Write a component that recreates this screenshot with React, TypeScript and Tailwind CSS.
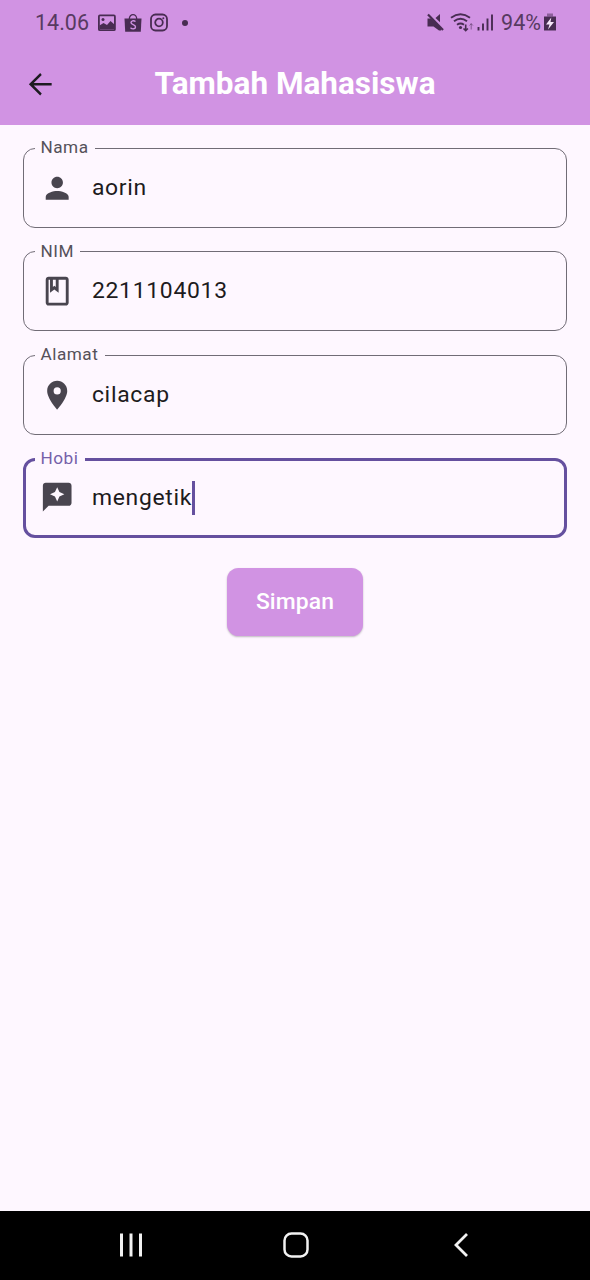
import type { ReactNode } from "react";

const ICONS = {
  person: "M12 12c2.21 0 4-1.79 4-4s-1.79-4-4-4-4 1.79-4 4 1.79 4 4 4zm0 2c-2.67 0-8 1.34-8 4v2h16v-2c0-2.66-5.33-4-8-4z",
  book: "M18 2H6c-1.1 0-2 .9-2 2v16c0 1.1.9 2 2 2h12c1.1 0 2-.9 2-2V4c0-1.1-.9-2-2-2zM9 4h2v5l-1-.75L9 9V4zm9 16H6V4h1v9l3-2.25L13 13V4h5v16z",
  place: "M12 2C8.13 2 5 5.13 5 9c0 5.25 7 13 7 13s7-7.75 7-13c0-3.87-3.13-7-7-7zm0 9.5a2.5 2.5 0 0 1 0-5 2.5 2.5 0 0 1 0 5z",
  review: "M20 2H4c-1.1 0-2 .9-2 2v18l4-4h14c1.1 0 2-.9 2-2V4c0-1.1-.9-2-2-2zm-6.43 9.57L12 15l-1.57-3.43L7 10l3.43-1.57L12 5l1.57 3.43L17 10l-3.43 1.57z",
};

function Field({ label, value, icon, focused = false }: { label: string; value: string; icon: string; focused?: boolean }) {
  return (
    <fieldset
      className={
        focused
          ? "mt-[0.2px] h-[89px] rounded-[12px] border-[3px] border-[#65509f] pl-[9px]"
          : "h-[89.5px] rounded-[12px] border border-[#716c76] pl-[11px]"
      }
    >
      <legend
        className={`h-5 pr-[6.5px] pl-[5.5px] text-[17.2px] tracking-[0.5px] ${focused ? "leading-[19px] text-[#7560a9]" : "leading-[18px] text-[#55515a]"}`}
      >
        {label}
      </legend>
      <div className={`flex items-center pl-[5px] ${focused ? "h-[57.5px]" : "h-[59px]"}`}>
        <svg viewBox="0 0 24 24" className={`size-[34.4px] shrink-0 fill-[#49454f] ${focused ? "mb-px" : ""}`}>
          <path d={icon} />
        </svg>
        <span className="ml-[17.5px] text-[22.9px] leading-[34px] tracking-[0.72px] text-[#1d1b20]">{value}</span>
        {focused && <span className="h-[34px] w-[3px] bg-[#65509f]" />}
      </div>
    </fieldset>
  );
}

function StatusIcon({ className, children }: { className: string; children: ReactNode }) {
  return (
    <svg viewBox="0 0 20 20" className={className} fill="none" stroke="#482c52" strokeWidth="1.8">
      {children}
    </svg>
  );
}

function StatusBar() {
  return (
    <div className="flex h-[46px] items-center justify-between pr-[33px] pl-[35px] text-[21.5px] text-[#573a61]">
      <div className="flex items-center">
        <span className="w-[62px] pt-px">14.06</span>
        <StatusIcon className="size-5">
          <rect x="1.9" y="2.4" width="16" height="14.8" rx="1" />
          <path d="M2.5 15.5v-3l4-2.5 3.5 2 3.5-4 4 3.5v4.5h-15z" fill="#482c52" stroke="none" />
          <circle cx="6" cy="6.5" r="1.5" fill="#482c52" stroke="none" />
        </StatusIcon>
        <StatusIcon className="ml-[6px] size-5">
          <path d="M6.3 6C6.3.2 13.7.2 13.7 6" strokeWidth="1.3" />
          <path d="M1.5 5.5h17l-.7 13.2H2.2z" fill="#482c52" stroke="none" />
          <path d="M12.5 8.5C10.5 7 8 8 8 9.6c0 2.3 4.5 1.8 4.5 4.3 0 2-3 2.7-5 .9" stroke="#d193e3" strokeWidth="1.4" />
        </StatusIcon>
        <StatusIcon className="ml-[6px] size-5">
          <rect x="2" y="1.5" width="16" height="16" rx="4.5" />
          <circle cx="10" cy="9.5" r="3.8" />
          <circle cx="14.3" cy="5.2" r="1" fill="#482c52" stroke="none" />
        </StatusIcon>
        <span className="ml-[13px] size-[6px] rounded-full bg-[#482c52]" />
      </div>
      <div className="flex items-center">
        <StatusIcon className="size-5">
          <path d="M1.5 5.5H5L15 15v2.500h-2L7.500 13.500h-6z" fill="#482c52" stroke="none" />
          <path d="M9.5 5 14 1v8.2z" fill="#482c52" stroke="none" />
          <path d="M2 1.5l15 15.5" strokeWidth="2.2" />
        </StatusIcon>
        <svg viewBox="0 0 24 20" className="ml-1 h-5 w-6" fill="none" stroke="#482c52" strokeWidth="1.9">
          <path d="M1 4.800q9.500-7 19 0M4 8.300q6.500-5 13 0M7 11.800q3.500-2.500 7 0" />
          <circle cx="10.5" cy="14.5" r="1.6" fill="#482c52" stroke="none" />
          <path d="M15.700 11.500v6m-2.200-2 2.200 2.200 2.200-2.200" strokeWidth="1.6" />
          <path d="M21.200 16.500v-6m-1.700 2 1.700-1.800 1.700 1.800" strokeWidth="1" opacity=".55" />
        </svg>
        <svg viewBox="0 0 17 20" className="ml-[3px] h-5 w-[17px]" stroke="#482c52" strokeWidth="1.9">
          <path d="M1.500 17.500v-3.500M6 17.500v-7M10.500 17.500V5.500M15 17.500V1.500" />
        </svg>
        <span className="ml-[7px] pt-px">94%</span>
        <svg viewBox="0 0 14 20" className="ml-[2px] h-5 w-[14px]">
          <path d="M4 .5h6v3H4z" fill="#482c52" opacity=".5" />
          <path d="M1 3.500h12V17.500H1z" fill="#482c52" />
          <path d="M8.300 4.500 3 11.500h3.500L5 16.500l6-7.500H7.500z" fill="#f5e6f8" />
        </svg>
      </div>
    </div>
  );
}

export default function App() {
  return (
    <main className="flex h-[1280px] w-[590px] flex-col bg-[#fef7ff] font-[Roboto,sans-serif]">
      <header className="h-[125px] bg-[#d193e3]">
        <StatusBar />
        <div className="grid h-[76px] grid-cols-[80px_1fr_80px] items-center">
          <button aria-label="Kembali" className="pt-px pl-[23px]">
            <svg viewBox="0 0 24 24" className="size-[34.4px] fill-[#1d1b20]">
              <path d="M20 11.100v1.800H7.500l5.600 5.600L12 19.900 4.100 12 12 4.100l1.100 1.400-5.600 5.600z" />
            </svg>
          </button>
          <h1 className="text-center text-[31.5px] font-bold text-white">Tambah Mahasiswa</h1>
        </div>
      </header>
      <form className="flex flex-1 flex-col px-[23px] pt-[13.4px]">
        <div className="flex flex-col gap-[14px]">
          <Field label="Nama" value="aorin" icon={ICONS.person} />
          <Field label="NIM" value="2211104013" icon={ICONS.book} />
          <Field label="Alamat" value="cilacap" icon={ICONS.place} />
          <Field label="Hobi" value="mengetik" icon={ICONS.review} focused />
        </div>
        <button
          type="button"
          className="mt-[30px] h-[68px] w-[136px] self-center rounded-[11.5px] bg-[#d193e3] pt-px text-[22.9px] font-medium tracking-[0.1px] text-white shadow-[0_1px_2px_rgba(0,0,0,0.25)]"
        >
          Simpan
        </button>
      </form>
      <nav className="flex h-[69px] items-center bg-black pb-[2px] pl-[119px] text-[#f2f2f2]">
        <svg viewBox="0 0 24 26" className="h-[26px] w-6" stroke="currentColor" strokeWidth="3">
          <path d="M2.500 1.500v23M12 1.500v23M21.500 1.500v23" />
        </svg>
        <svg viewBox="0 0 26 26" className="ml-[140px] size-[26px]" fill="none" stroke="currentColor" strokeWidth="2.5">
          <rect x="1.5" y="1.5" width="23" height="23" rx="7" />
        </svg>
        <svg viewBox="0 0 16 26" className="ml-[144px] h-[26px] w-4" fill="none" stroke="currentColor" strokeWidth="2.8">
          <path d="M14 2 3 13l11 11" />
        </svg>
      </nav>
    </main>
  );
}
